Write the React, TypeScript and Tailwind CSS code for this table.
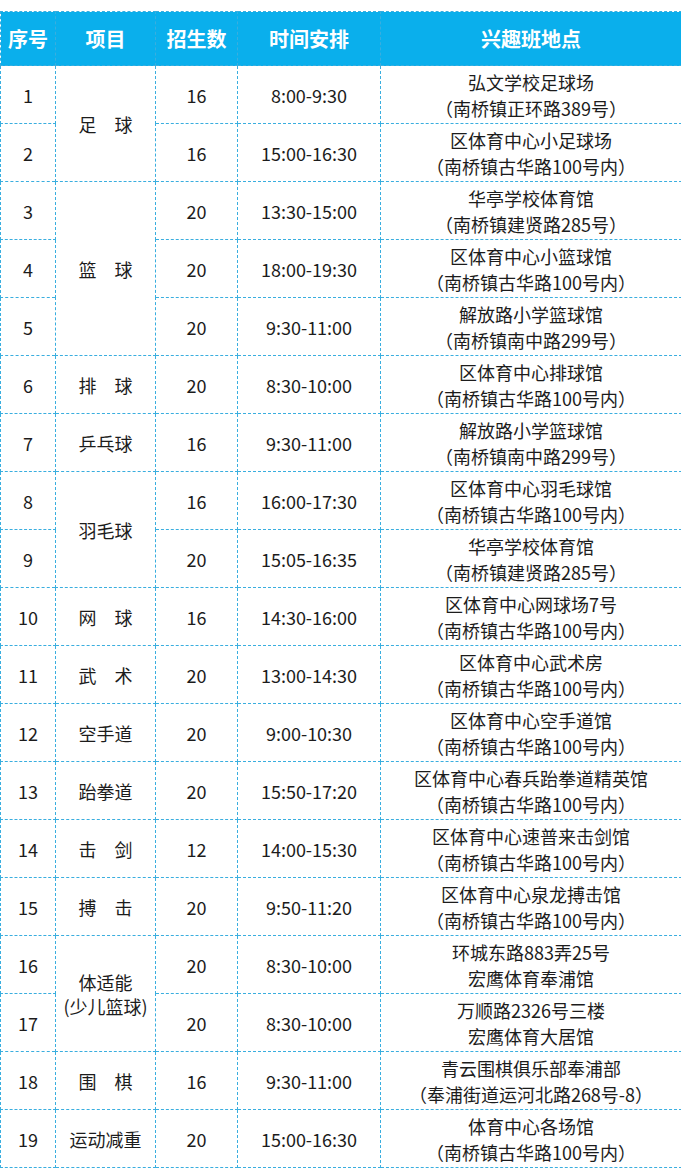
import React from "react";

type Row = {
  no: number;
  item?: string[];
  span?: number;
  count: number;
  time: string;
  place: string[];
};

const rows: Row[] = [
  { no: 1, item: ["足　球"], span: 2, count: 16, time: "8:00-9:30", place: ["弘文学校足球场", "（南桥镇正环路389号）"] },
  { no: 2, count: 16, time: "15:00-16:30", place: ["区体育中心小足球场", "（南桥镇古华路100号内）"] },
  { no: 3, item: ["篮　球"], span: 3, count: 20, time: "13:30-15:00", place: ["华亭学校体育馆", "（南桥镇建贤路285号）"] },
  { no: 4, count: 20, time: "18:00-19:30", place: ["区体育中心小篮球馆", "（南桥镇古华路100号内）"] },
  { no: 5, count: 20, time: "9:30-11:00", place: ["解放路小学篮球馆", "（南桥镇南中路299号）"] },
  { no: 6, item: ["排　球"], count: 20, time: "8:30-10:00", place: ["区体育中心排球馆", "（南桥镇古华路100号内）"] },
  { no: 7, item: ["乒乓球"], count: 16, time: "9:30-11:00", place: ["解放路小学篮球馆", "（南桥镇南中路299号）"] },
  { no: 8, item: ["羽毛球"], span: 2, count: 16, time: "16:00-17:30", place: ["区体育中心羽毛球馆", "（南桥镇古华路100号内）"] },
  { no: 9, count: 20, time: "15:05-16:35", place: ["华亭学校体育馆", "（南桥镇建贤路285号）"] },
  { no: 10, item: ["网　球"], count: 16, time: "14:30-16:00", place: ["区体育中心网球场7号", "（南桥镇古华路100号内）"] },
  { no: 11, item: ["武　术"], count: 20, time: "13:00-14:30", place: ["区体育中心武术房", "（南桥镇古华路100号内）"] },
  { no: 12, item: ["空手道"], count: 20, time: "9:00-10:30", place: ["区体育中心空手道馆", "（南桥镇古华路100号内）"] },
  { no: 13, item: ["跆拳道"], count: 20, time: "15:50-17:20", place: ["区体育中心春兵跆拳道精英馆", "（南桥镇古华路100号内）"] },
  { no: 14, item: ["击　剑"], count: 12, time: "14:00-15:30", place: ["区体育中心速普来击剑馆", "（南桥镇古华路100号内）"] },
  { no: 15, item: ["搏　击"], count: 20, time: "9:50-11:20", place: ["区体育中心泉龙搏击馆", "（南桥镇古华路100号内）"] },
  { no: 16, item: ["体适能", "(少儿篮球)"], span: 2, count: 20, time: "8:30-10:00", place: ["环城东路883弄25号", "宏鹰体育奉浦馆"] },
  { no: 17, count: 20, time: "8:30-10:00", place: ["万顺路2326号三楼", "宏鹰体育大居馆"] },
  { no: 18, item: ["围　棋"], count: 16, time: "9:30-11:00", place: ["青云围棋俱乐部奉浦部", "（奉浦街道运河北路268号-8）"] },
  { no: 19, item: ["运动减重"], count: 20, time: "15:00-16:30", place: ["体育中心各场馆", "（南桥镇古华路100号内）"] },
];

const cell = "border border-dashed border-[#3aaedf] text-center align-middle p-0";

export default function App() {
  return (
    <div className="w-[681px] bg-white pt-[11px] font-['Noto_Sans_CJK_SC',sans-serif] text-[#1c1c1c]">
      <table className="w-[681px] border-collapse table-fixed">
        <colgroup>
          <col className="w-[55px]" />
          <col className="w-[100px]" />
          <col className="w-[82px]" />
          <col className="w-[143px]" />
          <col className="w-[301px]" />
        </colgroup>
        <thead>
          <tr className="h-[54px] bg-[#0aafec] text-white text-[20px] font-bold">
            <th className={cell}>序号</th>
            <th className={cell}>项目</th>
            <th className={cell}>招生数</th>
            <th className={cell}>时间安排</th>
            <th className={cell}>兴趣班地点</th>
          </tr>
        </thead>
        <tbody className="text-[18px] leading-[26px]">
          {rows.map((r) => (
            <tr key={r.no} className="h-[58px]">
              <td className={cell}>{r.no}</td>
              {r.item && (
                <td className={cell} rowSpan={r.span ?? 1}>
                  {r.item.map((t) => (
                    <div key={t} className="leading-[24px]">{t}</div>
                  ))}
                </td>
              )}
              <td className={cell}>{r.count}</td>
              <td className={cell}>{r.time}</td>
              <td className={cell}>
                {r.place.map((t) => (
                  <div key={t}>{t}</div>
                ))}
              </td>
            </tr>
          ))}
        </tbody>
      </table>
    </div>
  );
}
